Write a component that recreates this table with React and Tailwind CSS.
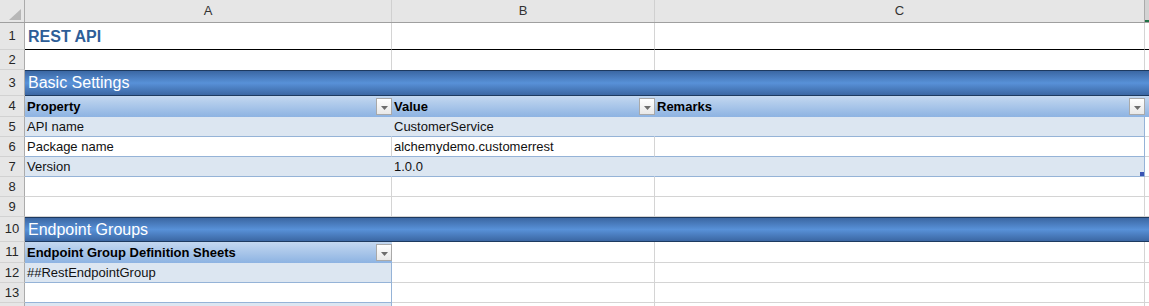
import React from "react";

const FONT = { fontFamily: '"Liberation Sans", Arial, sans-serif' };

// small autofilter button used on table header cells
function FilterButton() {
  return (
    <span className="flex h-[17px] w-[16px] shrink-0 items-center justify-center border border-[#a9a9a9] bg-gradient-to-b from-white to-[#e8e8e8]">
      <svg width="7" height="4" viewBox="0 0 7 4" className="mt-[3px]">
        <path d="M0 0h7L3.5 4z" fill="#6d6d6d" />
      </svg>
    </span>
  );
}

function Row({ n, h, children }) {
  return (
    <div className={`flex ${h}`}>
      <div className="flex w-[25px] shrink-0 items-center justify-center border-r border-b border-r-[#ababab] border-b-[#d2d2d2] bg-[#e6e6e6] text-[13px] text-[#262626]">
        {n}
      </div>
      {children}
    </div>
  );
}

// plain worksheet cells with default gridlines
function Blank({ cols = ["A", "B", "C"] }) {
  return (
    <>
      {cols.includes("A") && <div className="w-[367px] shrink-0 border-r border-b border-[#d4d4d4]" />}
      {cols.includes("B") && <div className="w-[263px] shrink-0 border-r border-b border-[#d4d4d4]" />}
      {cols.includes("C") && <div className="w-[490px] shrink-0 border-r border-b border-[#d4d4d4]" />}
      <div className="flex-1 border-b border-[#d4d4d4]" />
    </>
  );
}

function Section({ title }) {
  return (
    <div className="flex flex-1 items-center border-y border-[#1d3a60] bg-[linear-gradient(to_bottom,#3b67a3,#5891d8_50%,#3b67a3)] pl-[3px] text-[16px] text-white">
      {title}
    </div>
  );
}

function HeadCell({ w, label }) {
  return (
    <div className={`flex ${w} shrink-0 items-center justify-between pl-[2px] text-[13px] font-bold text-black`}>
      <span>{label}</span>
      <FilterButton />
    </div>
  );
}

function DataRow({ n, banded, name, value, last }) {
  const bg = banded ? "bg-[#dce6f1]" : "bg-white";
  const inner = banded ? "border-[#dce6f1]" : "border-r-[#d4d4d4]";
  return (
    <Row n={n} h="h-[20px]">
      <div className={`flex w-[367px] shrink-0 items-center border-r border-b border-b-[#95b3d7] ${inner} ${bg} pl-[2px]`}>
        {name}
      </div>
      <div className={`flex w-[263px] shrink-0 items-center border-r border-b border-b-[#95b3d7] ${inner} ${bg} pl-[2px]`}>
        {value}
      </div>
      <div className={`relative w-[490px] shrink-0 border-r border-b border-[#95b3d7] ${bg}`}>
        {last && <span className="absolute right-0 bottom-0 h-[4px] w-[4px] bg-[#3a55b4]" />}
      </div>
      <div className="flex-1 border-b border-[#d4d4d4]" />
    </Row>
  );
}

export default function App() {
  return (
    <div className="h-[306px] w-[1149px] overflow-hidden bg-white text-[13px] text-[#111]" style={FONT}>
      {/* column letters */}
      <div className="flex h-[23px] border-b border-[#9f9f9f] bg-[#e6e6e6] text-[13px] text-[#333]">
        <div className="relative w-[25px] shrink-0 border-r border-[#ababab]">
          <svg width="12" height="11" viewBox="0 0 12 11" className="absolute right-[3px] bottom-[2px]">
            <path d="M12 0v11H0z" fill="#b7b7b7" />
          </svg>
        </div>
        <div className="flex w-[367px] shrink-0 items-center justify-center border-r border-[#d0d0d0]">A</div>
        <div className="flex w-[263px] shrink-0 items-center justify-center border-r border-[#d0d0d0]">B</div>
        <div className="flex w-[490px] shrink-0 items-center justify-center border-r border-[#ababab]">C</div>
        <div className="flex-1 bg-[#d3d3d3] shadow-[inset_0_-2px_0_#217346]" />
      </div>

      <Row n={1} h="h-[27px]">
        <div className="flex w-[367px] shrink-0 items-end border-r border-b border-r-[#d4d4d4] border-b-black pb-[4px] pl-[3px] text-[16px] leading-none font-bold text-[#2e5e98]">
          REST API
        </div>
        <div className="w-[263px] shrink-0 border-r border-b border-r-[#d4d4d4] border-b-black" />
        <div className="w-[490px] shrink-0 border-r border-b border-r-[#d4d4d4] border-b-black" />
        <div className="flex-1 border-b border-black" />
      </Row>

      <Row n={2} h="h-[20px]">
        <div className="w-[367px] shrink-0 border-r border-[#d4d4d4]" />
        <div className="w-[263px] shrink-0 border-r border-[#d4d4d4]" />
        <div className="w-[490px] shrink-0 border-r border-[#d4d4d4]" />
        <div className="flex-1" />
      </Row>

      <Row n={3} h="h-[26px]">
        <Section title="Basic Settings" />
      </Row>

      <Row n={4} h="h-[21px]">
        <div className="flex flex-1 bg-gradient-to-b from-[#c4d8f0] to-[#8db3e2]">
          <HeadCell w="w-[367px]" label="Property" />
          <HeadCell w="w-[263px]" label="Value" />
          <HeadCell w="w-[490px]" label="Remarks" />
        </div>
      </Row>

      <DataRow n={5} banded name="API name" value="CustomerService" />
      <DataRow n={6} name="Package name" value="alchemydemo.customerrest" />
      <DataRow n={7} banded name="Version" value="1.0.0" last />

      <Row n={8} h="h-[20px]">
        <Blank />
      </Row>
      <Row n={9} h="h-[20px]">
        <Blank />
      </Row>

      <Row n={10} h="h-[25px]">
        <Section title="Endpoint Groups" />
      </Row>

      <Row n={11} h="h-[21px]">
        <div className="flex w-[367px] shrink-0 bg-gradient-to-b from-[#c4d8f0] to-[#8db3e2]">
          <HeadCell w="w-[367px]" label="Endpoint Group Definition Sheets" />
        </div>
        <Blank cols={["B", "C"]} />
      </Row>

      <Row n={12} h="h-[20px]">
        <div className="flex w-[367px] shrink-0 items-center border-r border-b border-[#95b3d7] bg-[#dce6f1] pl-[2px]">
          ##RestEndpointGroup
        </div>
        <Blank cols={["B", "C"]} />
      </Row>

      <Row n={13} h="h-[20px]">
        <div className="w-[367px] shrink-0 border-r border-b border-[#95b3d7] bg-white" />
        <Blank cols={["B", "C"]} />
      </Row>

      {/* next banded row, only its top edge is in view */}
      <Row h="h-[20px]">
        <div className="w-[367px] shrink-0 border-r border-[#95b3d7] bg-[#dce6f1]" />
        <Blank cols={["B", "C"]} />
      </Row>
    </div>
  );
}
